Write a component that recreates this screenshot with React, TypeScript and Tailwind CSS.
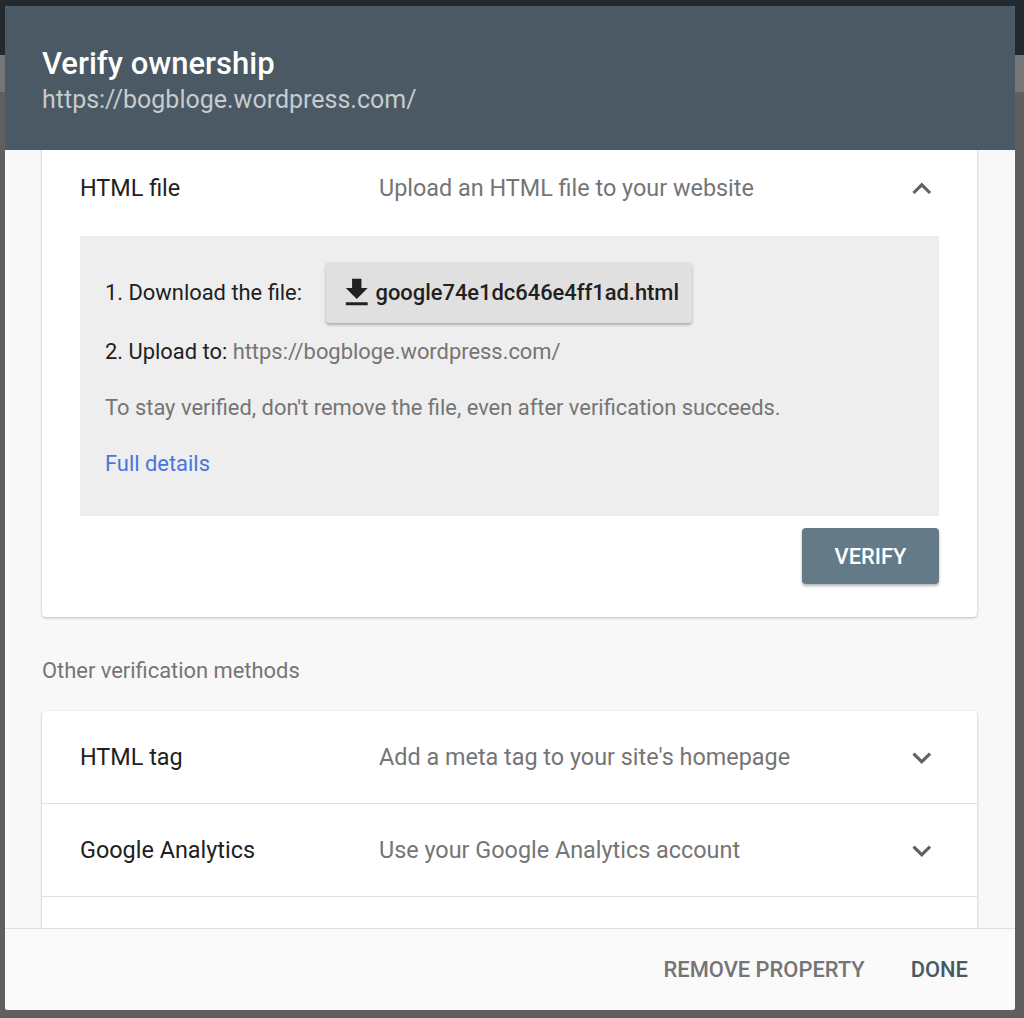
import React from 'react';

const ExpandLess = ({ className = '' }: { className?: string }) => (
  <svg viewBox="0 0 24 24" className={className} fill="currentColor">
    <path d="M12 8l-6 6 1.41 1.41L12 10.83l4.59 4.58L18 14z" />
  </svg>
);

const ExpandMore = ({ className = '' }: { className?: string }) => (
  <svg viewBox="0 0 24 24" className={className} fill="currentColor">
    <path d="M16.59 8.59L12 13.17 7.41 8.59 6 10l6 6 6-6z" />
  </svg>
);

const FileDownload = ({ className = '' }: { className?: string }) => (
  <svg viewBox="0 0 24 24" className={className} fill="currentColor">
    <path d="M19 9h-4V3H9v6H5l7 7 7-7zM5 18v2h14v-2H5z" />
  </svg>
);

const methods = [
  { name: 'HTML tag', desc: "Add a meta tag to your site's homepage" },
  { name: 'Google Analytics', desc: 'Use your Google Analytics account' },
];

const MethodRow = ({ name, desc }: { name: string; desc: string }) => (
  <div className="flex h-[93px] shrink-0 items-center border-b border-[#e0e0e0] px-[38px]">
    <div className="w-[299px] pt-[2px] text-[23.4px] text-[#212121]">{name}</div>
    <div className="flex-1 pt-[2px] text-[23.4px] text-[#757575]">{desc}</div>
    <ExpandMore className="mr-[-1px] mt-[2px] h-[37.5px] w-[37.5px] text-[#616161]" />
  </div>
);

export default function App() {
  return (
    <div
      className="relative h-[1018px] w-[1024px] overflow-hidden bg-[#5f5f5f]"
      style={{ fontFamily: 'Roboto, "Liberation Sans", sans-serif' }}
    >
      {/* dimmed page behind the dialog */}
      <div className="h-[55px] bg-[#22292f]" />
      <div className="h-[37px] bg-[#767676]" />

      <div className="absolute left-[5px] top-[6px] flex h-[1004px] w-[1010px] flex-col overflow-hidden rounded-[3px] bg-[#f8f8f8]">
        <div className="h-[144px] shrink-0 bg-[#4a5963] px-[37px] pt-[39px]">
          <div className="text-[31px] font-medium leading-[38px] text-white">Verify ownership</div>
          <div className="mt-[2px] text-[25px] leading-[30px] text-white/70">https://bogbloge.wordpress.com/</div>
        </div>

        <div className="flex-1 overflow-hidden px-[37px]">
          <div className="mt-[-10px] w-[935px] rounded-[4px] bg-white px-[38px] pb-[33px] shadow-[0_1px_3px_rgba(0,0,0,0.25)]">
            <div className="flex h-[96px] items-center pt-[2px]">
              <div className="w-[299px] text-[23.4px] text-[#212121]">HTML file</div>
              <div className="flex-1 text-[23.4px] text-[#757575]">Upload an HTML file to your website</div>
              <ExpandLess className="mr-[-1px] h-[37.5px] w-[37.5px] text-[#616161]" />
            </div>

            <div className="h-[280px] bg-[#eeeeee] pl-[25px] pt-[26px] text-[21.9px] text-[#212121]">
              <div className="flex h-[61px] items-center">
                <div className="w-[221px] pt-[2px]">1. Download the file:</div>
                <button className="flex h-[61px] items-center rounded-[4px] bg-[#e0e0e0] pl-[12px] pr-[13px] shadow-[0_2px_3px_rgba(0,0,0,0.28)]">
                  <FileDownload className="h-[37.5px] w-[37.5px] text-[#212121]" />
                  <span className="pt-[2px] text-[21.9px] font-medium text-[#212121]">google74e1dc646e4ff1ad.html</span>
                </button>
              </div>
              <div className="mt-[17px] leading-[24px]">
                2. Upload to: <span className="text-[#757575]">https://bogbloge.wordpress.com/</span>
              </div>
              <div className="mt-[32px] leading-[24px] text-[#757575]">
                To stay verified, don't remove the file, even after verification succeeds.
              </div>
              <div className="mt-[32px] leading-[24px] text-[#4a75dc]">Full details</div>
            </div>

            <div className="mt-[12px] flex justify-end">
              <button className="h-[56px] w-[137px] rounded-[4px] bg-[#647b87] pt-[2px] text-[21.9px] font-medium text-white shadow-[0_2px_3px_rgba(0,0,0,0.3)]">
                VERIFY
              </button>
            </div>
          </div>

          <div className="mt-[42px] text-[21.9px] leading-[24px] text-[#757575]">Other verification methods</div>

          <div className="mt-[28px] flex w-[935px] flex-col rounded-t-[4px] bg-white shadow-[0_1px_3px_rgba(0,0,0,0.25)]">
            {methods.map((m) => (
              <MethodRow key={m.name} name={m.name} desc={m.desc} />
            ))}
            <div className="h-[92px] bg-gradient-to-b from-white from-60% to-[#f4f4f4]" />
          </div>
        </div>

        <div className="flex h-[82px] shrink-0 items-center justify-end gap-[46px] border-t border-[#e0e0e0] bg-[#fafafa] pr-[47px] pt-[2px] text-[21.9px] font-medium">
          <span className="text-[#757575]">REMOVE PROPERTY</span>
          <span className="text-[#455a64]">DONE</span>
        </div>
      </div>
    </div>
  );
}
